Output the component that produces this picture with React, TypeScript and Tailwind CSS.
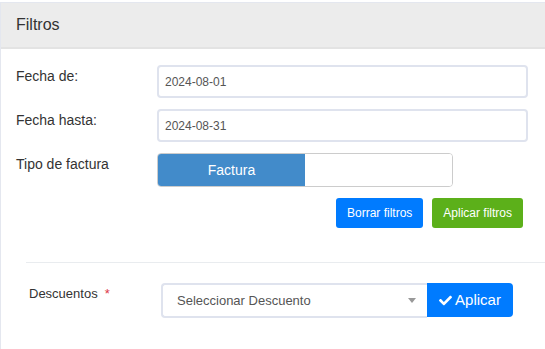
const font = { fontFamily: '"Liberation Sans", Arial, sans-serif' };

function DateRow({ label, value }: { label: string; value: string }) {
  return (
    <div className="flex items-start">
      <label className="w-[141px] pt-[1px] text-[14px] leading-5 text-[#333]">{label}</label>
      <div className="flex h-[33px] w-[371px] items-center rounded-[4px] border-2 border-[#dfe3ee] bg-white px-[6px] text-[12px] text-[#555]">
        {value}
      </div>
    </div>
  );
}

export default function App() {
  return (
    <div className="h-[349px] w-[545px] overflow-hidden bg-white" style={font}>
      <div className="mt-[2px] w-[547px] border border-[#e4e7ef] bg-white">
        {/* header */}
        <div className="flex h-[46px] items-center border-b-2 border-[#e3e3e3] bg-[#ececec] px-[15px]">
          <span className="text-[16px] text-[#333]">Filtros</span>
        </div>

        {/* filters */}
        <div className="flex flex-col gap-[11px] pl-[15px] pt-[16px]">
          <DateRow label="Fecha de:" value="2024-08-01" />
          <DateRow label="Fecha hasta:" value="2024-08-31" />
          <div className="flex items-start">
            <label className="w-[141px] pt-[1px] text-[14px] leading-5 text-[#333]">Tipo de factura</label>
            <div className="flex h-[34px] w-[296px] overflow-hidden rounded-[4px] border border-[#cccccc]">
              <button className="w-[147px] bg-[#428bca] text-[14px] text-white">Factura</button>
              <div className="flex-1 bg-white" />
            </div>
          </div>
          <div className="flex w-[507px] justify-end gap-[9px]">
            <button className="h-[30px] rounded-[3px] bg-[#007bff] px-[11px] text-[12px] text-white">Borrar filtros</button>
            <button className="h-[30px] rounded-[3px] bg-[#5cb01a] px-[11px] text-[12px] text-white">Aplicar filtros</button>
          </div>
        </div>

        <hr className="ml-[25px] mt-[34px] border-t border-[#e9ecef]" />

        {/* descuentos */}
        <div className="flex items-start pl-[28px] pt-[20px] pb-[40px]">
          <label className="flex w-[132px] gap-[7px] pt-[1px] text-[13px] leading-5 text-[#333]">
            Descuentos <span className="text-[#dc3545]">*</span>
          </label>
          <div className="flex h-[35px] w-[266px] items-center justify-between rounded-l-[4px] border-2 border-r-0 border-[#dfe3ee] bg-white pl-[14px] pr-[11px]">
            <span className="text-[13px] text-[#555]">Seleccionar Descuento</span>
            <span className="h-0 w-0 border-x-[4px] border-t-[5px] border-x-transparent border-t-[#999]" />
          </div>
          <button className="flex h-[34px] w-[86px] items-center justify-center gap-[3px] rounded-r-[4px] bg-[#007bff] text-[15px] text-white">
            <svg viewBox="0 0 512 512" className="h-[13px] w-[13px]" fill="currentColor">
              <path d="M173.898 439.404l-166.4-166.4c-9.997-9.997-9.997-26.206 0-36.204l36.203-36.204c9.997-9.998 26.207-9.998 36.204 0L192 312.69 432.095 72.596c9.997-9.997 26.207-9.997 36.204 0l36.203 36.204c9.997 9.997 9.997 26.206 0 36.204l-294.4 294.401c-9.998 9.997-26.207 9.997-36.204-.001z" />
            </svg>
            Aplicar
          </button>
        </div>
      </div>
    </div>
  );
}
